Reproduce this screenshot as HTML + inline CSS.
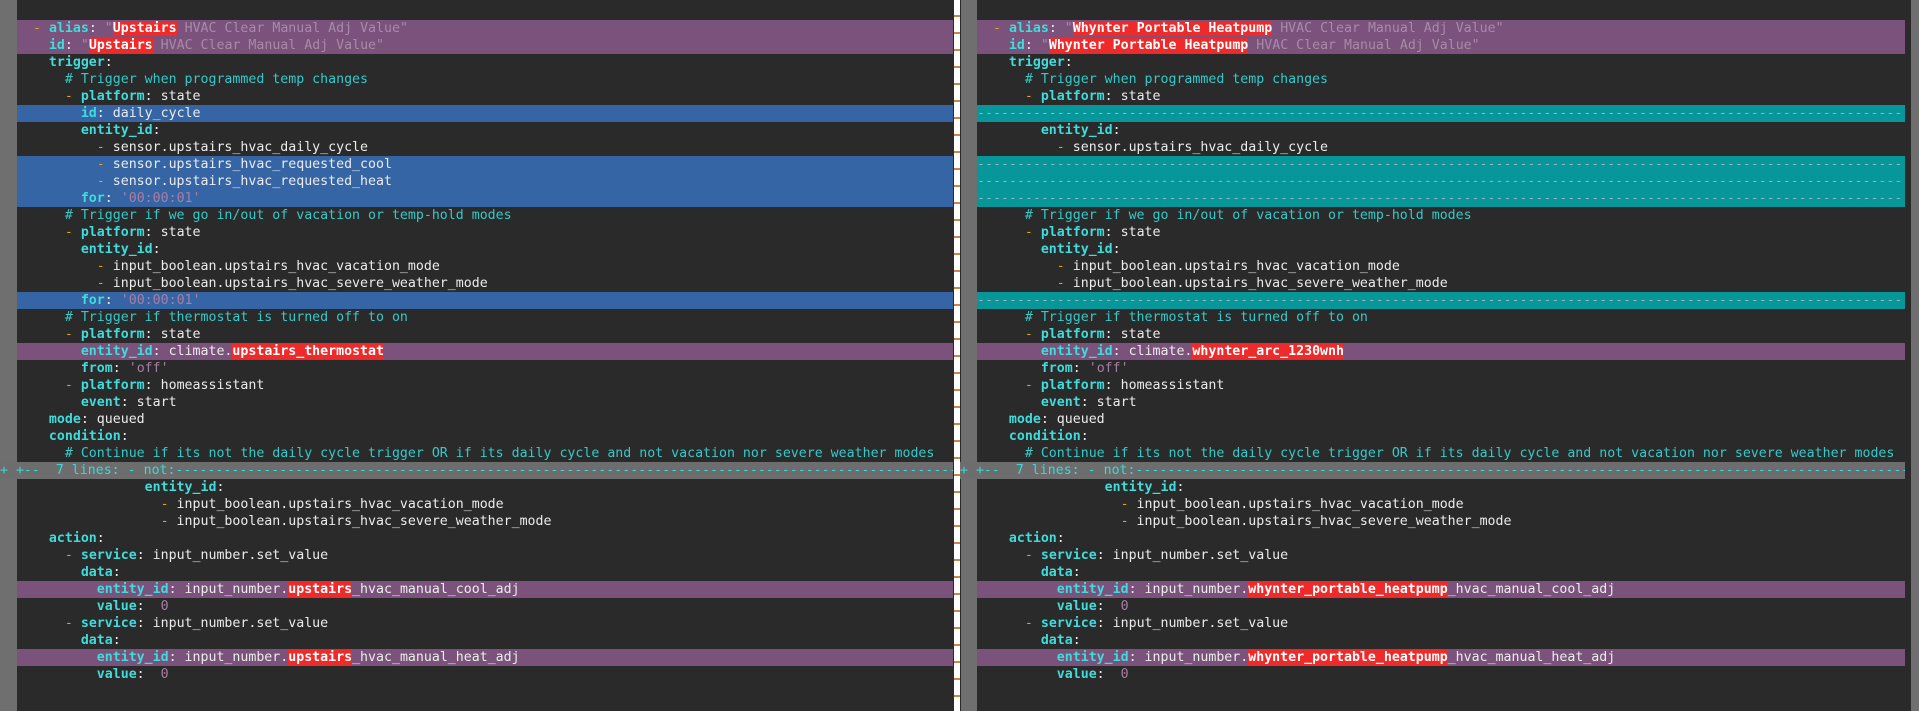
<!DOCTYPE html>
<html><head><meta charset="utf-8"><style>
html,body{margin:0;padding:0;background:#2a2a2a;width:1919px;height:711px;overflow:hidden}
.g{position:absolute;top:0;height:711px;background:#6f6f6f}
.pane{position:absolute;top:3px;font-family:"DejaVu Sans Mono","Liberation Mono",monospace;font-size:13.25px;color:#ececec}
.r{height:17px;line-height:17px;overflow:hidden;white-space:pre}
.P{background:#7a527c}.B{background:#3565a5}.T{background:#07979a;color:#8ab4c4}
.F{background:#6d6d6d;color:#3ad8d8;margin-left:-17px}
.k{color:#3fdcdc;font-weight:bold}.c{color:#34caca}.s{color:#a87fa6}.d{color:#d9a520}
.x{background:#ee2a2a;color:#fff;font-weight:bold}
.P .s{color:#a98aa8}
.sep{position:absolute;left:954px;top:0;width:6px;height:711px;background:repeating-linear-gradient(#fff 0 15px,#c8864a 15px 17px)}
</style></head><body>
<div class="g" style="left:0;width:17px"></div>
<div class="g" style="left:961px;width:16px"></div>
<div class="g" style="left:1911px;width:8px"></div>
<div class="sep"></div>

<div class="pane" style="left:17px;width:936px">
<div class="r"> </div>
<div class="r P">  <span class="d">-</span> <span class="k">alias</span>: <span class="s">"<span class="x">Upstairs</span> HVAC Clear Manual Adj Value"</span></div>
<div class="r P">    <span class="k">id</span>: <span class="s">"<span class="x">Upstairs</span> HVAC Clear Manual Adj Value"</span></div>
<div class="r">    <span class="k">trigger</span>:</div>
<div class="r">      <span class="c"># Trigger when programmed temp changes</span></div>
<div class="r">      <span class="d">-</span> <span class="k">platform</span>: state</div>
<div class="r B">        <span class="k">id</span>: daily_cycle</div>
<div class="r">        <span class="k">entity_id</span>:</div>
<div class="r">          <span class="d">-</span> sensor.upstairs_hvac_daily_cycle</div>
<div class="r B">          <span class="d">-</span> sensor.upstairs_hvac_requested_cool</div>
<div class="r B">          <span class="d">-</span> sensor.upstairs_hvac_requested_heat</div>
<div class="r B">        <span class="k">for</span>: <span class="s">'00:00:01'</span></div>
<div class="r">      <span class="c"># Trigger if we go in/out of vacation or temp-hold modes</span></div>
<div class="r">      <span class="d">-</span> <span class="k">platform</span>: state</div>
<div class="r">        <span class="k">entity_id</span>:</div>
<div class="r">          <span class="d">-</span> input_boolean.upstairs_hvac_vacation_mode</div>
<div class="r">          <span class="d">-</span> input_boolean.upstairs_hvac_severe_weather_mode</div>
<div class="r B">        <span class="k">for</span>: <span class="s">'00:00:01'</span></div>
<div class="r">      <span class="c"># Trigger if thermostat is turned off to on</span></div>
<div class="r">      <span class="d">-</span> <span class="k">platform</span>: state</div>
<div class="r P">        <span class="k">entity_id</span>: climate.<span class="x">upstairs_thermostat</span></div>
<div class="r">        <span class="k">from</span>: <span class="s">'off'</span></div>
<div class="r">      <span class="d">-</span> <span class="k">platform</span>: homeassistant</div>
<div class="r">        <span class="k">event</span>: start</div>
<div class="r">    <span class="k">mode</span>: queued</div>
<div class="r">    <span class="k">condition</span>:</div>
<div class="r">      <span class="c"># Continue if its not the daily cycle trigger OR if its daily cycle and not vacation nor severe weather modes</span></div>
<div class="r F">+ +--  7 lines: - not:------------------------------------------------------------------------------------------------------</div>
<div class="r">                <span class="k">entity_id</span>:</div>
<div class="r">                  <span class="d">-</span> input_boolean.upstairs_hvac_vacation_mode</div>
<div class="r">                  <span class="d">-</span> input_boolean.upstairs_hvac_severe_weather_mode</div>
<div class="r">    <span class="k">action</span>:</div>
<div class="r">      <span class="d">-</span> <span class="k">service</span>: input_number.set_value</div>
<div class="r">        <span class="k">data</span>:</div>
<div class="r P">          <span class="k">entity_id</span>: input_number.<span class="x">upstairs</span>_hvac_manual_cool_adj</div>
<div class="r">          <span class="k">value</span>:  <span class="s">0</span></div>
<div class="r">      <span class="d">-</span> <span class="k">service</span>: input_number.set_value</div>
<div class="r">        <span class="k">data</span>:</div>
<div class="r P">          <span class="k">entity_id</span>: input_number.<span class="x">upstairs</span>_hvac_manual_heat_adj</div>
<div class="r">          <span class="k">value</span>:  <span class="s">0</span></div>
</div>

<div class="pane" style="left:977px;width:928px">
<div class="r"> </div>
<div class="r P">  <span class="d">-</span> <span class="k">alias</span>: <span class="s">"<span class="x">Whynter Portable Heatpump</span> HVAC Clear Manual Adj Value"</span></div>
<div class="r P">    <span class="k">id</span>: <span class="s">"<span class="x">Whynter Portable Heatpump</span> HVAC Clear Manual Adj Value"</span></div>
<div class="r">    <span class="k">trigger</span>:</div>
<div class="r">      <span class="c"># Trigger when programmed temp changes</span></div>
<div class="r">      <span class="d">-</span> <span class="k">platform</span>: state</div>
<div class="r T">--------------------------------------------------------------------------------------------------------------------</div>
<div class="r">        <span class="k">entity_id</span>:</div>
<div class="r">          <span class="d">-</span> sensor.upstairs_hvac_daily_cycle</div>
<div class="r T">--------------------------------------------------------------------------------------------------------------------</div>
<div class="r T">--------------------------------------------------------------------------------------------------------------------</div>
<div class="r T">--------------------------------------------------------------------------------------------------------------------</div>
<div class="r">      <span class="c"># Trigger if we go in/out of vacation or temp-hold modes</span></div>
<div class="r">      <span class="d">-</span> <span class="k">platform</span>: state</div>
<div class="r">        <span class="k">entity_id</span>:</div>
<div class="r">          <span class="d">-</span> input_boolean.upstairs_hvac_vacation_mode</div>
<div class="r">          <span class="d">-</span> input_boolean.upstairs_hvac_severe_weather_mode</div>
<div class="r T">--------------------------------------------------------------------------------------------------------------------</div>
<div class="r">      <span class="c"># Trigger if thermostat is turned off to on</span></div>
<div class="r">      <span class="d">-</span> <span class="k">platform</span>: state</div>
<div class="r P">        <span class="k">entity_id</span>: climate.<span class="x">whynter_arc_1230wnh</span></div>
<div class="r">        <span class="k">from</span>: <span class="s">'off'</span></div>
<div class="r">      <span class="d">-</span> <span class="k">platform</span>: homeassistant</div>
<div class="r">        <span class="k">event</span>: start</div>
<div class="r">    <span class="k">mode</span>: queued</div>
<div class="r">    <span class="k">condition</span>:</div>
<div class="r">      <span class="c"># Continue if its not the daily cycle trigger OR if its daily cycle and not vacation nor severe weather modes</span></div>
<div class="r F">+ +--  7 lines: - not:------------------------------------------------------------------------------------------------------</div>
<div class="r">                <span class="k">entity_id</span>:</div>
<div class="r">                  <span class="d">-</span> input_boolean.upstairs_hvac_vacation_mode</div>
<div class="r">                  <span class="d">-</span> input_boolean.upstairs_hvac_severe_weather_mode</div>
<div class="r">    <span class="k">action</span>:</div>
<div class="r">      <span class="d">-</span> <span class="k">service</span>: input_number.set_value</div>
<div class="r">        <span class="k">data</span>:</div>
<div class="r P">          <span class="k">entity_id</span>: input_number.<span class="x">whynter_portable_heatpump</span>_hvac_manual_cool_adj</div>
<div class="r">          <span class="k">value</span>:  <span class="s">0</span></div>
<div class="r">      <span class="d">-</span> <span class="k">service</span>: input_number.set_value</div>
<div class="r">        <span class="k">data</span>:</div>
<div class="r P">          <span class="k">entity_id</span>: input_number.<span class="x">whynter_portable_heatpump</span>_hvac_manual_heat_adj</div>
<div class="r">          <span class="k">value</span>:  <span class="s">0</span></div>
</div>
</body></html>
